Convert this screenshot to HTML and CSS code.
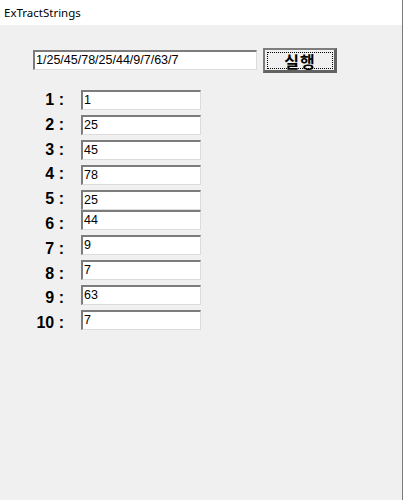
FILE: index.html
```html
<!DOCTYPE html>
<html lang="ko">
<head>
<meta charset="utf-8">
<title>ExTractStrings</title>
<link rel="stylesheet" href="styles.css">
</head>
<body>
<div class="window">
  <div class="titlebar">ExTractStrings</div>
  <div class="content">
    <div class="input-row">
      <div class="field wide">1/25/45/78/25/44/9/7/63/7</div>
      <button class="run"><span class="focus">실행</span></button>
    </div>
    <div class="grid">
      <div class="labels">
        <div class="label">1 :</div>
        <div class="label">2 :</div>
        <div class="label">3 :</div>
        <div class="label">4 :</div>
        <div class="label">5 :</div>
        <div class="label">6 :</div>
        <div class="label">7 :</div>
        <div class="label">8 :</div>
        <div class="label">9 :</div>
        <div class="label">10 :</div>
      </div>
      <div class="boxes">
        <div class="field small">1</div>
        <div class="field small">25</div>
        <div class="field small">45</div>
        <div class="field small">78</div>
        <div class="field small tight">25</div>
        <div class="field small">44</div>
        <div class="field small">9</div>
        <div class="field small">7</div>
        <div class="field small">63</div>
        <div class="field small">7</div>
      </div>
    </div>
  </div>
</div>
</body>
</html>
```
FILE: styles.css
```css
html, body {
  margin: 0;
  padding: 0;
}
body {
  background: #f0f0f0;
}
.window {
  box-sizing: border-box;
  width: 403px;
  height: 500px;
  background: #f0f0f0;
  border-right: 1px solid #7a7a7a;
  font-family: "Liberation Sans", Arial, sans-serif;
}
.titlebar {
  height: 25px;
  background: #ffffff;
  font-family: "Noto Sans", "Open Sans", sans-serif;
  font-size: 11.5px;
  line-height: 25px;
  padding-left: 4px;
  color: #000;
}
.content {
  padding: 23px 0 0 33px;
}
.input-row {
  display: flex;
  align-items: flex-start;
}
.field {
  box-sizing: border-box;
  height: 20px;
  background: #ffffff;
  border-top: 2px solid #7c7c7c;
  border-left: 2px solid #7c7c7c;
  border-right: 1px solid #dcdcdc;
  border-bottom: 1px solid #dcdcdc;
  font-family: "Liberation Sans", Arial, sans-serif;
  font-size: 12.5px;
  line-height: 17px;
  padding-left: 1px;
  color: #000;
  white-space: nowrap;
}
.wide {
  width: 224px;
  margin-top: 2px;
}
.run {
  box-sizing: border-box;
  width: 74px;
  height: 25px;
  margin-left: 6px;
  padding: 2px 1px 1px 2px;
  background: #f0f0f0;
  border-top: 2px solid #7d7d7d;
  border-left: 2px solid #7d7d7d;
  border-right: 3px solid #626262;
  border-bottom: 3px solid #626262;
  display: flex;
  font: inherit;
}
.focus {
  flex: 1;
  height: 100%;
  box-sizing: border-box;
  border: 1px dotted #000;
  display: flex;
  align-items: center;
  justify-content: center;
  font-family: "Noto Sans CJK KR", sans-serif;
  font-size: 16px;
  font-weight: 700;
  color: #000;
  letter-spacing: 1px;
}
.grid {
  display: flex;
  margin-top: 17px;
}
.labels {
  width: 31px;
  margin-top: -3px;
  margin-right: 17px;
  display: flex;
  flex-direction: column;
}
.label {
  height: 24.8px;
  line-height: 25px;
  text-align: right;
  font-weight: bold;
  font-size: 16px;
  white-space: nowrap;
  color: #000;
}
.boxes {
  display: flex;
  flex-direction: column;
}
.small {
  width: 120px;
  margin-bottom: 5px;
}
.small.tight {
  margin-bottom: 0;
}
```
